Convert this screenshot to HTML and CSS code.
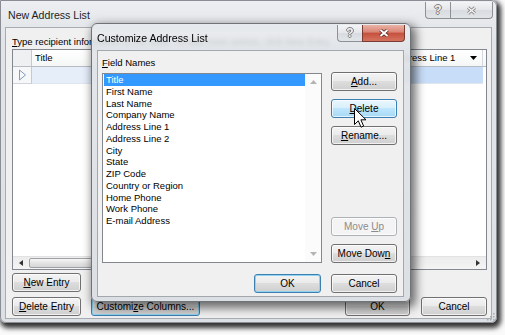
FILE: index.html
```html
<!DOCTYPE html>
<html lang="en">
<head>
    <meta charset="UTF-8">
    <title>New Address List</title>
    <link rel="stylesheet" href="styles.css">
</head>
<body>
    <div class="window">
        <div class="titlebar">
            <span class="title">New Address List</span>
            <div class="caption">
                <span class="cap-btn cap-help">?</span>
                <span class="cap-btn cap-close">
                    <svg width="11" height="9" viewBox="0 0 11 9"><path d="M2 1.5 L9 7.5 M9 1.5 L2 7.5" stroke="#8c8c8c" stroke-width="3" fill="none"/><path d="M2 1.5 L9 7.5 M9 1.5 L2 7.5" stroke="#f6f6f6" stroke-width="1.3" fill="none"/></svg>
                </span>
            </div>
        </div>
        <div class="client">
            <p class="hint"><u>T</u>ype recipient information in the table. To add more entries, click New Entry.</p>
            <div class="grid">
                <div class="grid-head">
                    <div class="corner"></div>
                    <div class="col">Title</div>
                    <div class="col">First Name</div>
                    <div class="col">Last Name</div>
                    <div class="col col-last">Address Line 1
                        <svg class="drop" width="7" height="4" viewBox="0 0 7 4"><path d="M0 0 H7 L3.5 4 Z" fill="#000"/></svg>
                    </div>
                    <div class="fill"></div>
                </div>
                <div class="grid-row">
                    <div class="row-head">
                        <svg width="9" height="12" viewBox="0 0 9 12"><path d="M1.5 1 L7.5 6 L1.5 11 Z" stroke="#8298bd" fill="none"/></svg>
                    </div>
                    <div class="cell"></div>
                    <div class="cell"></div>
                    <div class="cell"></div>
                    <div class="cell cell-last"></div>
                </div>
                <div class="grid-space"></div>
                <div class="hscroll">
                    <span class="arrow"><svg width="4" height="6" viewBox="0 0 4 6"><path d="M4 0 V6 L0 3 Z" fill="#333"/></svg></span>
                    <span class="thumb"></span>
                    <span class="track"></span>
                    <span class="arrow"><svg width="4" height="6" viewBox="0 0 4 6"><path d="M0 0 V6 L4 3 Z" fill="#333"/></svg></span>
                </div>
            </div>
            <div class="actions">
                <button class="btn w-entry"><u>N</u>ew Entry</button>
            </div>
            <div class="actions">
                <button class="btn w-entry"><u>D</u>elete Entry</button>
                <button class="btn btn-focus w-columns">Customi<u>z</u>e Columns...</button>
                <button class="btn w-ok push">OK</button>
                <button class="btn w-cancel">Cancel</button>
            </div>
        </div>
        <svg class="grip" width="8" height="8" viewBox="0 0 8 8" fill="#a9acb0">
            <rect x="6" y="0" width="1.5" height="1.5"/><rect x="3" y="3" width="1.5" height="1.5"/><rect x="6" y="3" width="1.5" height="1.5"/>
            <rect x="0" y="6" width="1.5" height="1.5"/><rect x="3" y="6" width="1.5" height="1.5"/><rect x="6" y="6" width="1.5" height="1.5"/>
        </svg>
    </div>

    <!-- dialogo modal encima -->
    <div class="dialog">
        <div class="dlg-title">
            <span class="title">Customize Address List</span>
            <div class="caption">
                <span class="cap-btn cap-help">?</span>
                <span class="cap-btn cap-close red">
                    <svg width="12" height="10" viewBox="0 0 12 10"><path d="M2.5 2 L9.5 8 M9.5 2 L2.5 8" stroke="#5a1d1a" stroke-width="3.6" fill="none"/><path d="M2.5 2 L9.5 8 M9.5 2 L2.5 8" stroke="#fff" stroke-width="2" fill="none"/></svg>
                </span>
            </div>
        </div>
        <div class="dlg-client">
            <div class="dlg-body">
                <div class="fields">
                    <div class="label"><u>F</u>ield Names</div>
                    <div class="listbox">
                        <ul class="items">
                            <li class="selected">Title</li>
                            <li>First Name</li>
                            <li>Last Name</li>
                            <li>Company Name</li>
                            <li>Address Line 1</li>
                            <li>Address Line 2</li>
                            <li>City</li>
                            <li>State</li>
                            <li>ZIP Code</li>
                            <li>Country or Region</li>
                            <li>Home Phone</li>
                            <li>Work Phone</li>
                            <li>E-mail Address</li>
                        </ul>
                        <div class="vscroll">
                            <svg width="7" height="4" viewBox="0 0 7 4"><path d="M0 4 H7 L3.5 0 Z" fill="#b4b4b4"/></svg>
                            <svg width="7" height="4" viewBox="0 0 7 4"><path d="M0 0 H7 L3.5 4 Z" fill="#b4b4b4"/></svg>
                        </div>
                    </div>
                </div>
                <div class="side">
                    <button class="btn"><u>A</u>dd...</button>
                    <button class="btn btn-hover"><u>D</u>elete</button>
                    <button class="btn"><u>R</u>ename...</button>
                    <button class="btn btn-disabled push-down">Move <u>U</u>p</button>
                    <button class="btn">Move Dow<u>n</u></button>
                </div>
            </div>
            <div class="dlg-footer">
                <button class="btn btn-focus w-dok">OK</button>
                <button class="btn w-dcancel">Cancel</button>
            </div>
        </div>
    </div>

    <svg class="cursor" width="13" height="21" viewBox="0 0 13 21">
        <path d="M0.5 0.5 V16.5 L4.3 12.8 L7 19.2 L9.6 18.1 L6.9 11.8 H12 Z" fill="#fff" stroke="#000" stroke-width="1" stroke-linejoin="round"/>
    </svg>
</body>
</html>
```

FILE: styles.css
```css
* {
    box-sizing: border-box;
}
body {
    margin: 0;
    width: 505px;
    height: 335px;
    overflow: hidden;
    position: relative;
    background: #fafafa;
    font-family: "Liberation Sans", Arial, sans-serif;
    font-size: 9.5px;
    color: #000;
}
u {
    text-decoration-thickness: 1px;
    text-underline-offset: 1px;
}

/* ventana de fondo (inactiva) */
.window {
    position: relative;
    width: 497px;
    height: 323px;
    display: flex;
    flex-direction: column;
    padding: 0 4px 3px 4px;
    border: 1px solid #8a8e94;
    border-radius: 0 6px 6px 6px;
    background: linear-gradient(#eceef1, #e1e4e8 40px, #dcdfe3);
    box-shadow: 2px 3px 5px 2px rgba(0, 0, 0, 0.8);
}
.grip {
    position: absolute;
    right: 1px;
    bottom: 1px;
}
.titlebar {
    height: 26px;
    display: flex;
    align-items: center;
    padding: 1px 0 0 3px;
}
.title {
    font-size: 10.6px;
    color: #1e1e1e;
    white-space: nowrap;
}
.caption {
    margin-left: auto;
    margin-right: -1px;
    align-self: flex-start;
    display: flex;
}
.cap-btn {
    height: 17px;
    display: flex;
    align-items: center;
    justify-content: center;
    border: 1px solid #8d9095;
    border-top: none;
    background: linear-gradient(#f3f4f6, #e4e6e9 50%, #d8dbdf 51%, #e2e5e8);
    font-weight: bold;
    font-size: 12px;
    color: #f4f4f4;
    text-shadow: -1px 0 #7d7d7d, 1px 0 #7d7d7d, 0 -1px #7d7d7d, 0 1px #7d7d7d;
}
.cap-help {
    width: 25px;
    border-right: none;
    border-bottom-left-radius: 4px;
}
.cap-close {
    width: 43px;
    border-bottom-right-radius: 4px;
}
.cap-close.red {
    border-color: #7b3b35;
    background: linear-gradient(#eab2a6, #d98575 45%, #c5503c 50%, #d4735f);
}

.client {
    height: 292px;
    background: #f0f0f0;
    border: 1px solid #a7acb2;
    padding: 8px 4px 0 6px;
}
.hint {
    margin: 0;
    height: 13px;
    line-height: 12px;
    white-space: nowrap;
}

/* tabla de destinatarios */
.grid {
    height: 221px;
    display: flex;
    flex-direction: column;
    border: 1px solid #828790;
    background: #fff;
}
.grid-head,
.grid-row {
    display: flex;
    height: 17px;
    flex-shrink: 0;
}
.grid-head {
    border-bottom: 1px solid #b7bcc3;
    background: linear-gradient(#fff, #f5f6f7);
}
.corner,
.row-head {
    width: 19px;
    border-right: 1px solid #c6cad0;
    background: #eef0f2;
}
.row-head {
    display: flex;
    align-items: center;
    justify-content: center;
    border-bottom: 1px solid #d0d4da;
    background: #f6f7f8;
}
.col {
    width: 119px;
    padding-left: 3px;
    line-height: 16px;
    border-right: 1px solid #d5d8dc;
    white-space: nowrap;
}
.col-last {
    width: 94px;
    display: flex;
    align-items: center;
}
.drop {
    margin-left: auto;
    margin-right: 5px;
}
.fill {
    flex: 1;
}
.cell {
    width: 119px;
    background: #e6eefa;
    border-bottom: 1px solid #dfe6f0;
}
.cell-last {
    width: 94px;
    background: #c8ddf7;
}
.grid-space {
    flex: 1;
}
.hscroll {
    height: 13px;
    display: flex;
    background: linear-gradient(#ececec, #f4f4f4);
    border-top: 1px solid #e2e2e2;
}
.arrow {
    width: 16px;
    display: flex;
    align-items: center;
    justify-content: center;
}
.thumb {
    width: 160px;
    margin: 1px 0;
    border: 1px solid #9ea1a5;
    border-radius: 2px;
    background: linear-gradient(#f6f6f6, #e3e3e3 50%, #d6d6d6);
}
.track {
    flex: 1;
}

/* botones estilo Windows 7 */
.btn {
    height: 19px;
    padding: 0;
    border: 1px solid #707070;
    border-radius: 3px;
    background: linear-gradient(#f3f3f3, #ebebeb 45%, #dddddd 50%, #cfcfcf);
    font-family: inherit;
    font-size: 10px;
    color: #000;
    box-shadow: inset 0 0 0 1px rgba(255, 255, 255, 0.7);
}
.btn-hover {
    border-color: #3c7fb1;
    background: linear-gradient(#eaf6fd, #d9f0fc 45%, #bee6fd 50%, #a7d9f5);
}
.btn-focus {
    border-color: #3c7fb1;
    box-shadow: inset 0 0 0 1px #8fd3f0;
}
.btn-disabled {
    border-color: #adb2b5;
    background: #f4f4f4;
    color: #8b8b8b;
}
.actions {
    display: flex;
    gap: 10px;
    margin-top: 3px;
}
.actions + .actions {
    margin-top: 5px;
}
.w-entry { width: 69px; }
.w-columns { width: 109px; }
.w-ok { width: 65px; }
.w-cancel { width: 66px; }
.actions .btn.push {
    margin-left: auto;
    margin-right: 1px;
}

/* dialogo Customize Address List */
.dialog {
    position: absolute;
    left: 91px;
    top: 23px;
    width: 320px;
    height: 279px;
    display: flex;
    flex-direction: column;
    padding: 0 6px 4px 5px;
    border: 1px solid #6e7378;
    border-radius: 6px;
    background: linear-gradient(rgba(232, 235, 239, 0.8), rgba(224, 227, 231, 0.9) 30px, #dcdfe3);
    backdrop-filter: blur(2px);
    box-shadow: 3px 4px 10px 2px rgba(0, 0, 0, 0.55);
}
.dlg-title {
    height: 26px;
    display: flex;
    align-items: center;
    padding-top: 1px;
}
.dlg-title .title {
    color: #000;
}
.dlg-client {
    flex: 1;
    background: #f0f0f0;
    border: 1px solid #a3a8ae;
    padding: 0 6px 3px 4px;
}
.dlg-body {
    display: flex;
    gap: 9px;
}
.fields {
    width: 220px;
}
.label {
    height: 22px;
    padding-top: 6px;
    line-height: 12px;
}
.listbox {
    height: 190px;
    display: flex;
    border: 1px solid #828790;
    background: #fff;
}
.items {
    flex: 1;
    list-style: none;
    margin: 0;
    padding: 0 0 0 1px;
}
.items li {
    line-height: 11.75px;
    padding-left: 2px;
    white-space: nowrap;
}
.items .selected {
    background: #3399ff;
    color: #fff;
}
.vscroll {
    width: 16px;
    display: flex;
    flex-direction: column;
    justify-content: space-between;
    align-items: center;
    padding: 6px 0 6px;
    background: #fbfbfb;
}
.side {
    width: 66px;
    display: flex;
    flex-direction: column;
    gap: 8px;
    padding-top: 21px;
}
.side .push-down {
    margin-top: auto;
}
.dlg-footer {
    display: flex;
    justify-content: flex-end;
    gap: 10px;
    margin-top: 11px;
}
.w-dok { width: 67px; }
.w-dcancel { width: 66px; }

.cursor {
    position: absolute;
    left: 354px;
    top: 108px;
}
```
